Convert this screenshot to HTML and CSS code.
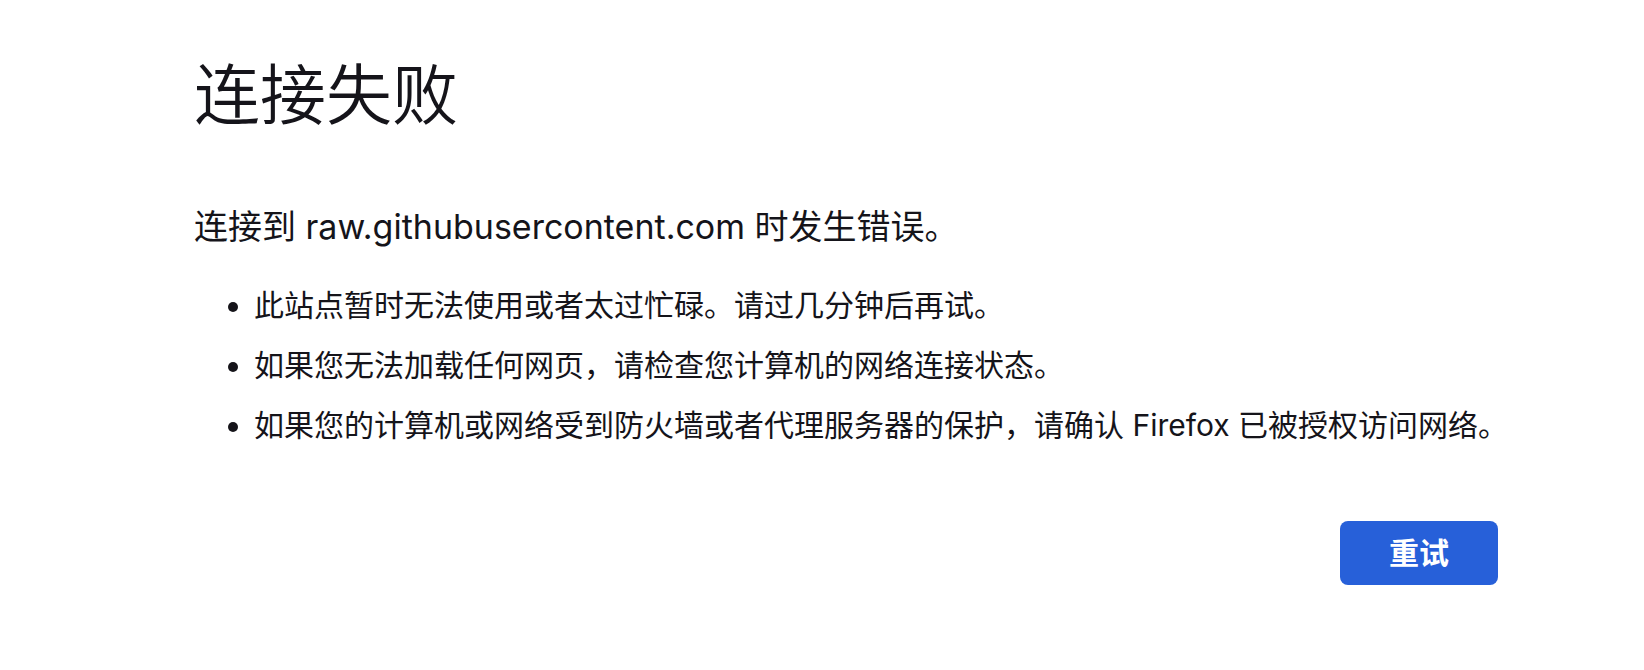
FILE: index.html
```html
<!DOCTYPE html>
<html lang="zh-CN">
<head>
<meta charset="utf-8">
<title>连接失败</title>
<link rel="stylesheet" href="styles.css">
</head>
<body>
<main class="error-page">
  <h1 class="title">连接失败</h1>
  <p class="summary">连接到 raw.githubusercontent.com 时发生错误。</p>
  <ul class="tips">
    <li>此站点暂时无法使用或者太过忙碌。请过几分钟后再试。</li>
    <li>如果您无法加载任何网页，请检查您计算机的网络连接状态。</li>
    <li>如果您的计算机或网络受到防火墙或者代理服务器的保护，请确认 Firefox 已被授权访问网络。</li>
  </ul>
  <div class="actions">
    <button class="retry" type="button">重试</button>
  </div>
</main>
</body>
</html>
```
FILE: styles.css
```css
body {
  margin: 0;
  background: #fff;
  color: #15141a;
  font-family: Inter, "Noto Sans CJK SC", sans-serif;
}

.error-page {
  box-sizing: border-box;
  max-width: 1522px;
  padding: 47px 0 48px 194px;
}

.title {
  margin: 0;
  font-size: 66px;
  font-weight: 350;
  line-height: 96px;
}

.summary {
  margin: 60px 0 0;
  font-size: 34px;
  line-height: 48px;
}

.tips {
  margin: 24px 0 0;
  padding: 0 0 0 60px;
  font-size: 30px;
  line-height: 60px;
}

.actions {
  display: flex;
  justify-content: flex-end;
  margin-top: 66px;
  padding-right: 24px;
}

.retry {
  min-width: 158px;
  padding: 10px 24px;
  border: 0;
  border-radius: 8px;
  background: #2760d9;
  color: #fff;
  font: 700 30px/44px Inter, "Noto Sans CJK SC", sans-serif;
}
```
